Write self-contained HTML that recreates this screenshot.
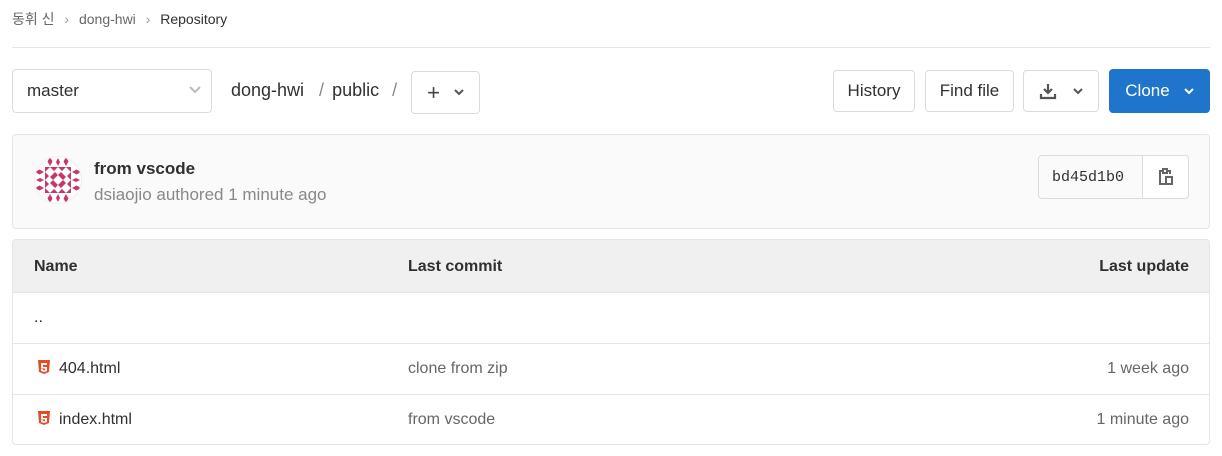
<!DOCTYPE html><html><head><meta charset="utf-8"><style>
body{margin:0;width:1222px;height:456px;background:#fff;font-family:"Liberation Sans","Noto Sans CJK KR",sans-serif;color:#303030;position:relative;overflow:hidden}
.a{position:absolute}
.btn{position:absolute;border:1px solid #dbdbdb;border-radius:4px;background:#fff;box-sizing:border-box;font-size:17px;display:flex;align-items:center;justify-content:center}
.t{font-size:16px}
</style></head><body>
<div class="a" style="left:12px;top:9px;font-size:14px;color:#666">동휘 신 <span style="margin:0 6px;color:#999">›</span> dong-hwi <span style="margin:0 6px;color:#999">›</span> <span style="color:#303030">Repository</span></div>
<div class="a" style="left:12px;top:47px;width:1198px;height:1px;background:#e5e5e5"></div>
<div class="btn" style="left:12px;top:69px;width:200px;height:44px;justify-content:flex-start;padding-left:14px">master<svg class="a" style="left:176px;top:16px" width="12" height="8"><path d="M1 1l5 5 5-5" stroke="#bbb" stroke-width="2" fill="none"/></svg></div>
<div class="a" style="left:231px;top:80px;font-size:18px">dong-hwi <span style="color:#888;margin:0 8px 0 10px">/</span>public <span style="color:#888;margin-left:8px">/</span></div>
<div class="btn" style="left:411px;top:71px;width:69px;height:43px;font-size:22px"><b style="font-weight:400;margin-right:14px;color:#444">+</b><svg width="10" height="7"><path d="M1 1l4 4 4-4" stroke="#555" stroke-width="2" fill="none"/></svg></div>
<div class="btn" style="left:833px;top:70px;width:82px;height:42px">History</div>
<div class="btn" style="left:925px;top:70px;width:89px;height:42px">Find file</div>
<div class="btn" style="left:1023px;top:70px;width:76px;height:42px"><svg width="18" height="18" style="margin-right:16px"><path d="M9 2v9M5 7l4 4 4-4M2 12v4h14v-4" stroke="#555" stroke-width="2.2" fill="none"/></svg><svg width="10" height="7"><path d="M1 1l4 4 4-4" stroke="#555" stroke-width="2" fill="none"/></svg></div>
<div class="btn" style="left:1109px;top:69px;width:101px;height:44px;background:#1f75cb;border-color:#1f75cb;color:#fff">Clone<svg width="10" height="7" style="margin-left:14px"><path d="M1 1l4 4 4-4" stroke="#fff" stroke-width="2" fill="none"/></svg></div>
<div class="a" style="left:12px;top:134px;width:1198px;height:95px;box-sizing:border-box;border:1px solid #e5e5e5;border-radius:4px;background:#fafafa"></div>
<svg class="a" style="left:34px;top:156px" width="48" height="48"><defs><clipPath id="c"><circle cx="24" cy="24" r="23"/></clipPath></defs><circle cx="24" cy="24" r="23.5" fill="#fff" stroke="#eee"/>
<g clip-path="url(#c)" fill="#c8376a">
<rect x="11" y="11" width="26" height="26"/>
<g fill="#fff"><path d="M16 11l5 5-5 5-5-5z M32 11l5 5-5 5-5-5z M16 27l5 5-5 5-5-5z M32 27l5 5-5 5-5-5z M24 19l5 5-5 5-5-5z M24 11l4 4-4 4-4-4z M24 29l4 4-4 4-4-4z M11 24l4-4 4 4-4 4z M29 24l4-4 4 4-4 4z"/></g>
<path d="M16 1l2.5 4.5-2.5 4.5-2.5-4.5z M32 1l2.5 4.5-2.5 4.5-2.5-4.5z M24 2l2 4-2 4-2-4z M16 38l2.5 4.5-2.5 4.5-2.5-4.5z M32 38l2.5 4.5-2.5 4.5-2.5-4.5z M24 38l2 4-2 4-2-4z M1 16l4.5-2.5 4.5 2.5-4.5 2.5z M1 32l4.5-2.5 4.5 2.5-4.5 2.5z M38 16l4.5-2.5 4.5 2.5-4.5 2.5z M38 32l4.5-2.5 4.5 2.5-4.5 2.5z M2 24l4-2 4 2-4 2z M38 24l4-2 4 2-4 2z"/></g></svg>
<div class="a" style="left:94px;top:159px;font-size:17px;font-weight:bold;color:#303030">from vscode</div>
<div class="a" style="left:94px;top:185px;font-size:17px;color:#888">dsiaojio authored 1 minute ago</div>
<div class="btn" style="left:1038px;top:155px;width:151px;height:44px;background:#fafafa;justify-content:flex-start;overflow:hidden"><span style="font-family:'Liberation Mono',monospace;font-size:15px;padding-left:13px;width:90px">bd45d1b0</span><div style="position:absolute;left:103px;top:0;width:46px;height:42px;border-left:1px solid #dbdbdb;background:#fff;display:flex;align-items:center;justify-content:center"><svg width="16" height="18"><path d="M4 3h-2v13h5M10 3h2v3M5 1h4v4h-4z" stroke="#666" stroke-width="2" fill="none"/><rect x="8" y="9" width="6" height="7" stroke="#666" stroke-width="2" fill="none"/></svg></div></div>
<div class="a" style="left:12px;top:239px;width:1198px;height:206px;box-sizing:border-box;border:1px solid #e5e5e5;border-radius:4px;overflow:hidden">
<div style="height:52px;background:#f0f0f0;border-bottom:1px solid #e5e5e5;position:relative;font-weight:bold;font-size:16px">
<span class="a" style="left:21px;top:18px">Name</span><span class="a" style="left:395px;top:18px">Last commit</span><span class="a" style="right:20px;top:18px">Last update</span></div>
<div style="height:50px;border-bottom:1px solid #e5e5e5;position:relative"><span class="a t" style="left:21px;top:16px">..</span></div>
<div style="height:50px;border-bottom:1px solid #e5e5e5;position:relative"><svg class="a" style="left:25px;top:16px" width="12" height="14"><path d="M0 0h12l-1 12-5 2-5-2z" fill="#e44d26"/><path d="M3 3h6v2h-4v2h4v4l-3 1-3-1v-2h2v1l1 .5 1-.5v-1.5h-4z" fill="#fff"/></svg><span class="a t" style="left:46px;top:16px">404.html</span><span class="a t" style="left:395px;top:16px;color:#666">clone from zip</span><span class="a t" style="right:20px;top:16px;color:#666">1 week ago</span></div>
<div style="height:50px;position:relative"><svg class="a" style="left:25px;top:16px" width="12" height="14"><path d="M0 0h12l-1 12-5 2-5-2z" fill="#e44d26"/><path d="M3 3h6v2h-4v2h4v4l-3 1-3-1v-2h2v1l1 .5 1-.5v-1.5h-4z" fill="#fff"/></svg><span class="a t" style="left:46px;top:16px">index.html</span><span class="a t" style="left:395px;top:16px;color:#666">from vscode</span><span class="a t" style="right:20px;top:16px;color:#666">1 minute ago</span></div>
</div>
</body></html>
